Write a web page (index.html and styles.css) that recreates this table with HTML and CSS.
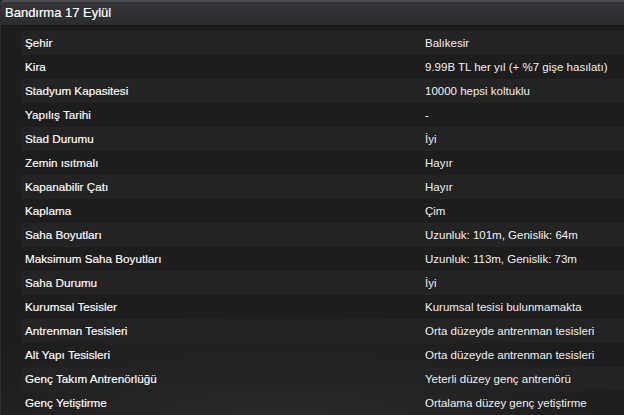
FILE: index.html
```html
<!DOCTYPE html>
<html lang="tr">
<head>
<meta charset="utf-8">
<link rel="stylesheet" href="styles.css">
</head>
<body>
<div class="panel">
  <div class="header">Bandırma 17 Eylül</div>
  <div class="list">
    <div class="row stripe"><span class="label">Şehir</span><span class="value">Balıkesir</span></div>
    <div class="row"><span class="label">Kira</span><span class="value">9.99B TL her yıl (+ %7 gişe hasılatı)</span></div>
    <div class="row stripe"><span class="label">Stadyum Kapasitesi</span><span class="value">10000 hepsi koltuklu</span></div>
    <div class="row"><span class="label">Yapılış Tarihi</span><span class="value">-</span></div>
    <div class="row stripe"><span class="label">Stad Durumu</span><span class="value">İyi</span></div>
    <div class="row"><span class="label">Zemin ısıtmalı</span><span class="value">Hayır</span></div>
    <div class="row stripe"><span class="label">Kapanabilir Çatı</span><span class="value">Hayır</span></div>
    <div class="row"><span class="label">Kaplama</span><span class="value">Çim</span></div>
    <div class="row stripe"><span class="label">Saha Boyutları</span><span class="value">Uzunluk: 101m, Genislik: 64m</span></div>
    <div class="row"><span class="label">Maksimum Saha Boyutları</span><span class="value">Uzunluk: 113m, Genislik: 73m</span></div>
    <div class="row stripe"><span class="label">Saha Durumu</span><span class="value">İyi</span></div>
    <div class="row"><span class="label">Kurumsal Tesisler</span><span class="value">Kurumsal tesisi bulunmamakta</span></div>
    <div class="row stripe"><span class="label">Antrenman Tesisleri</span><span class="value">Orta düzeyde antrenman tesisleri</span></div>
    <div class="row"><span class="label">Alt Yapı Tesisleri</span><span class="value">Orta düzeyde antrenman tesisleri</span></div>
    <div class="row stripe"><span class="label">Genç Takım Antrenörlüğü</span><span class="value">Yeterli düzey genç antrenörü</span></div>
    <div class="row"><span class="label">Genç Yetiştirme</span><span class="value">Ortalama düzey genç yetiştirme</span></div>
  </div>
</div>
</body>
</html>
```
FILE: styles.css
```css
html, body {
  margin: 0;
  padding: 0;
  height: 100%;
}
body {
  background: #1d1d1d;
  font-family: "Liberation Sans", Arial, sans-serif;
  color: #f2f2f2;
  overflow: hidden;
}
.panel {
  height: 100%;
  background: radial-gradient(ellipse 60% 30% at 45% 105%, #2a2a2a 0%, #1d1d1d 100%);
  border-left: 1px solid #2c2c2c;
}
.header {
  height: 23px;
  border-top: 2px solid #4c4d50;
  border-bottom: 1px solid #141414;
  border-top-left-radius: 3px;
  background: linear-gradient(#34363a, #2a2c30);
  font-size: 13px;
  line-height: 22px;
  padding-left: 4px;
  color: #ffffff;
  -webkit-text-stroke: 0.2px #ffffff;
}
.list {
  padding-top: 5px;
  padding-left: 20px;
}
.row {
  display: grid;
  grid-template-columns: 404px 1fr;
  height: 24px;
  align-items: baseline;
}
.row > span {
  line-height: 24px;
}
.stripe {
  background: #232323;
}
.label {
  padding-left: 4px;
  font-size: 11.7px;
  color: #ffffff;
  -webkit-text-stroke: 0.15px #ffffff;
}
.value {
  font-size: 11.5px;
  color: #f0f0f0;
}
```
